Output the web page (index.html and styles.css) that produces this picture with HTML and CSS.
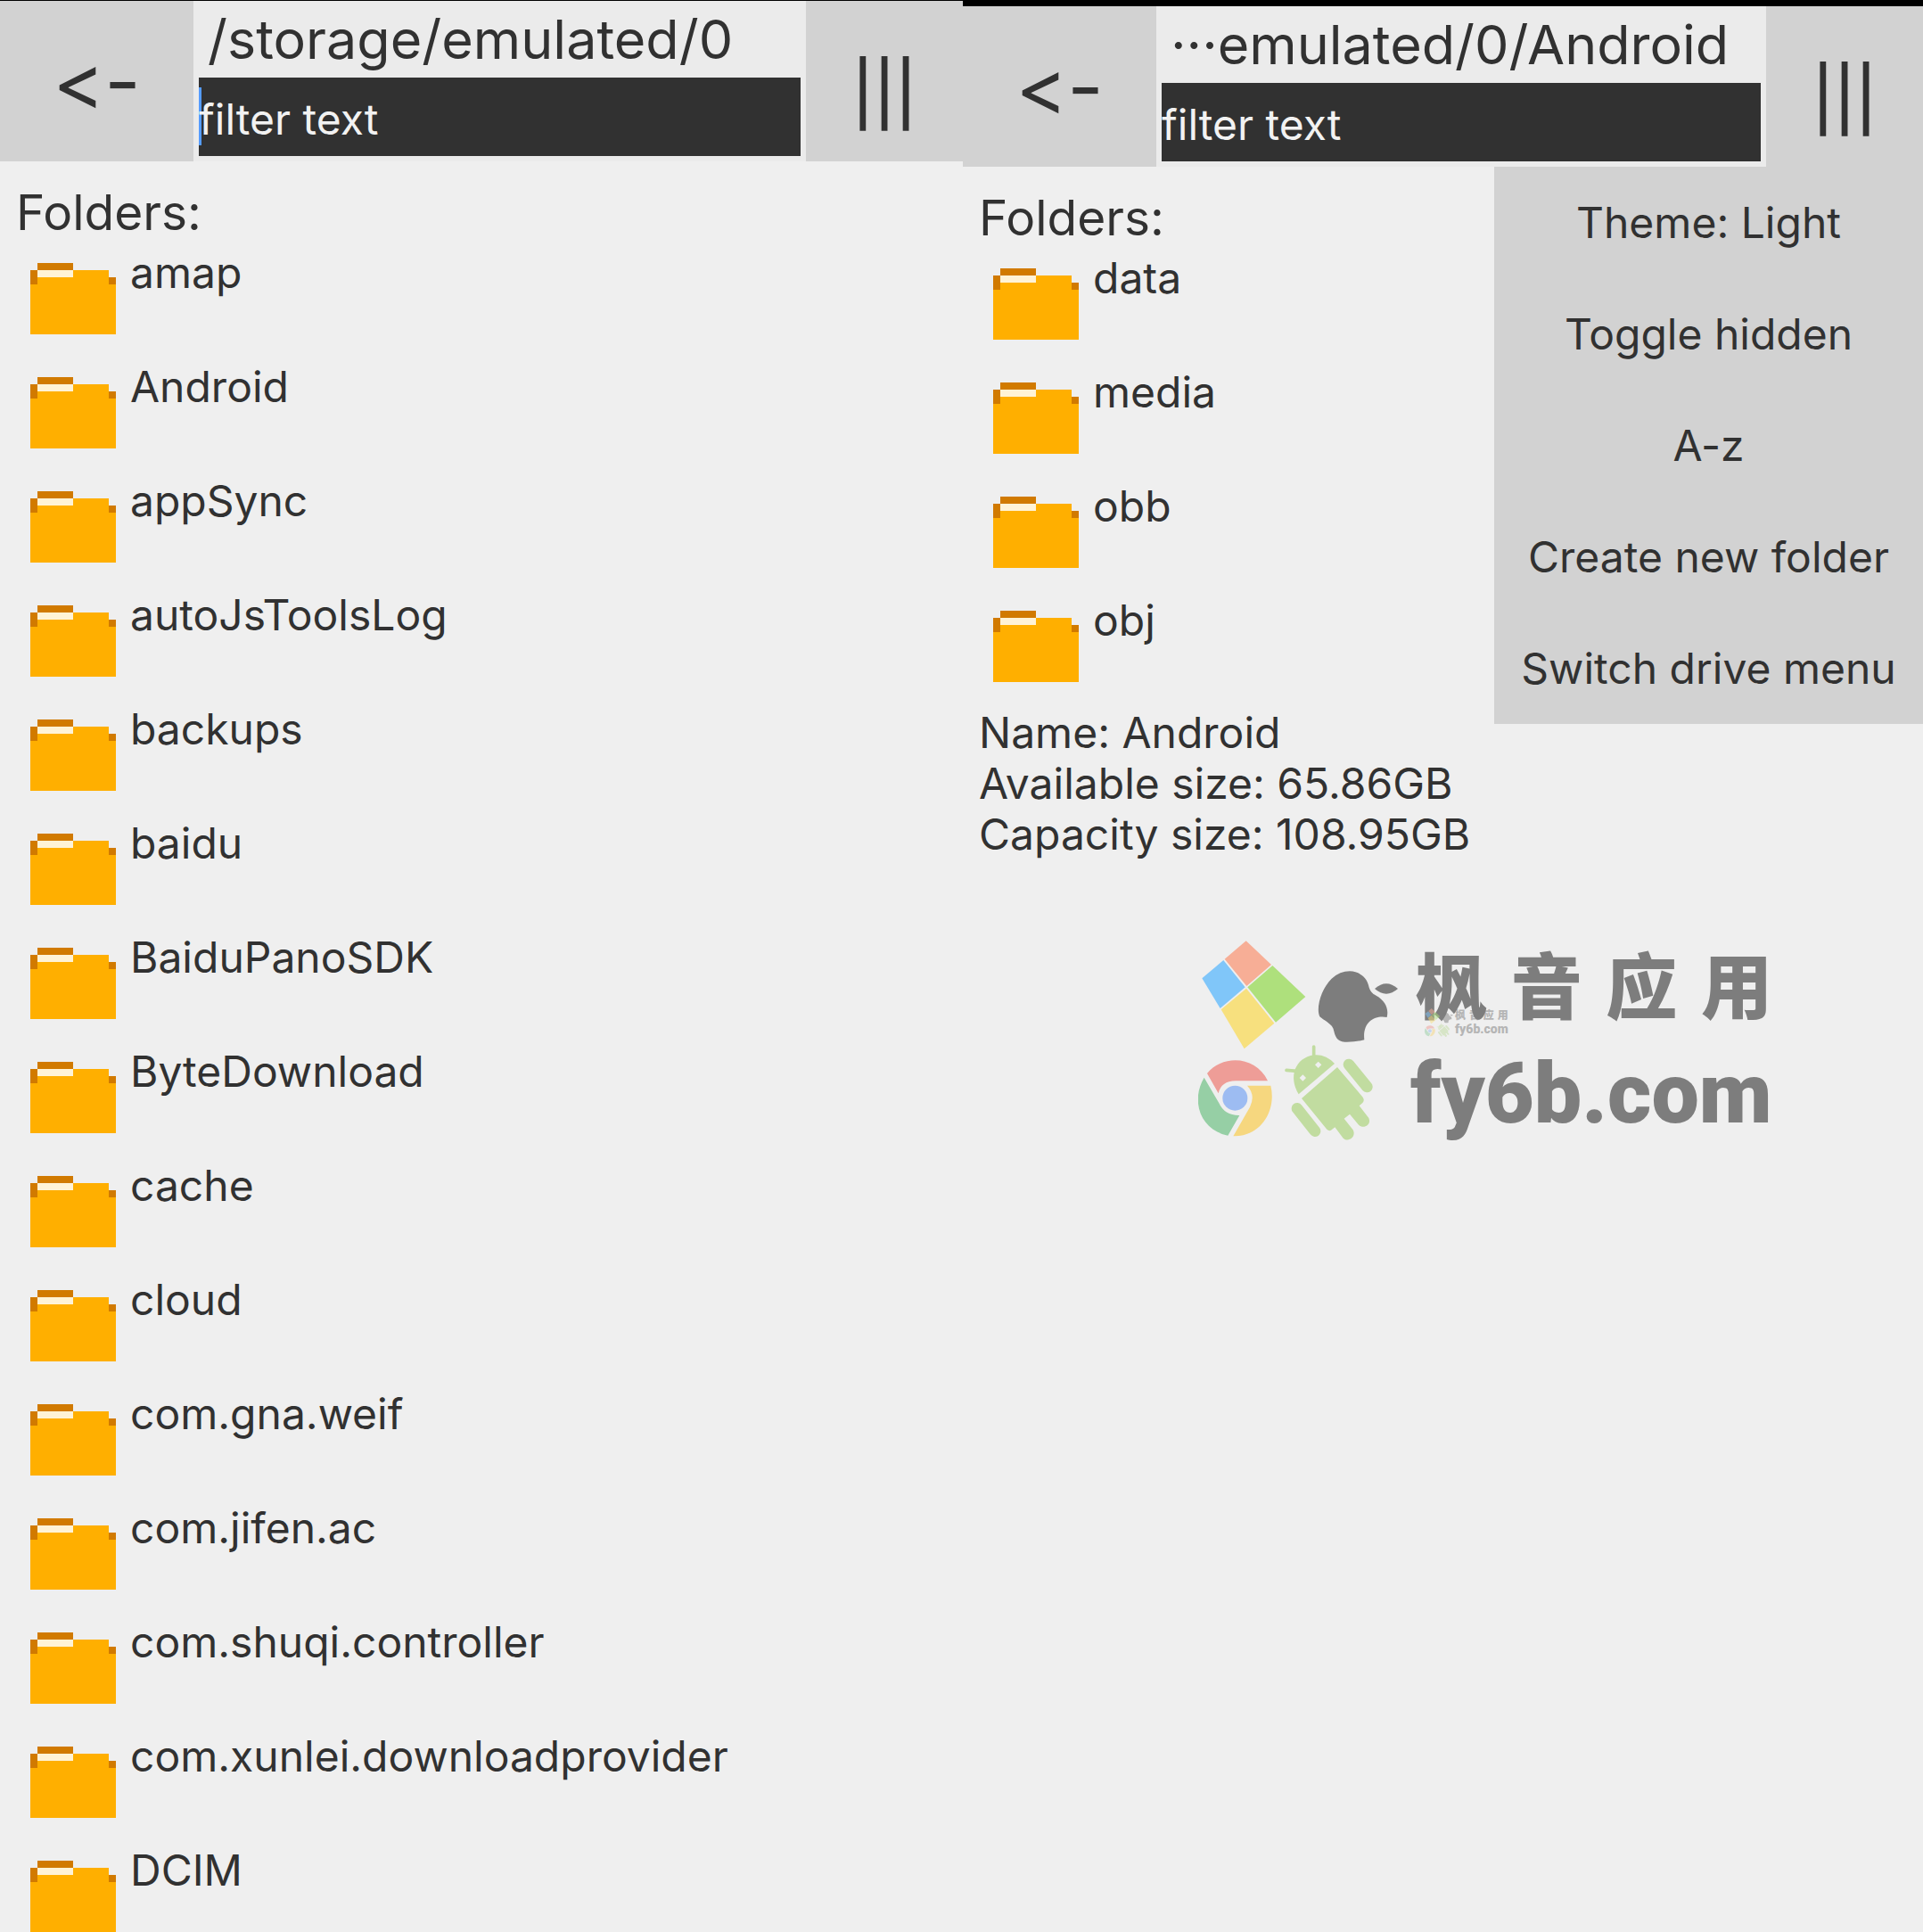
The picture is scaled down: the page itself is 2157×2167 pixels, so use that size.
FILE: index.html
```html
<!DOCTYPE html>
<html lang="en">
<head>
    <meta charset="UTF-8">
    <meta name="viewport" content="width=device-width, initial-scale=1.0">
    <title>File manager</title>
    <link rel="stylesheet" href="styles.css">
</head>
<body>
    <!-- shared drawings -->
    <svg class="defs" aria-hidden="true">
        <symbol id="folder" viewBox="0 0 12 10" shape-rendering="crispEdges">
            <path fill="#ffaf00" d="M0 1h11v1h1v8H0z"/>
            <path fill="#d17a00" d="M1 0h5v1H1zM0 1h1v2H0zM11 2h1v1h-1z"/>
            <path fill="#fff3d6" d="M1 1h5v1H1z"/>
        </symbol>
        <symbol id="brands" viewBox="42 45 672 672">
            <path fill="#f7ae96" d="M203 46L288 126 205 198 131 107z"/>
            <path fill="#80c6f9" d="M127 111L200 202 116 273 55 172z"/>
            <path fill="#aee07c" d="M292 129L403 234 303 320 208 202z"/>
            <path fill="#f7e07e" d="M204 206L298 323 197 409 119 277z"/>
            <path fill="#7d7d7d" d="M552 148C585 148 610 171 615 195C619 215 628 224 641 230C672 247 684 275 677 303C636 295 594 319 601 379Q570 387 535 386C508 384 503 365 499 350C496 325 464 314 451 301C437 272 457 205 491 173Q519 148 552 148z"/>
            <path fill="#7d7d7d" d="M636 207Q675 172 714 207Q675 241 636 207z"/>
            <path fill="#ee9d97" d="M72 492C125 427 237 433 276 517H168Q119 518 110 559z"/>
            <path fill="#96cfa5" d="M62 506L112 592Q131 634 181 633L142 701C48 682 16 583 62 506z"/>
            <path fill="#f6d77f" d="M207 533H286C307 620 249 706 160 703L216 605Q236 565 207 533z"/>
            <circle fill="#9dbcf2" cx="166" cy="575" r="42"/>
            <g fill="#c1dca0">
                <path d="M380 562C345 505 366 440 432 430Q472 427 501 459z"/>
                <path d="M510 471L596 572Q603 583 595 591L584 601 616 642C626 665 598 680 582 665L552 629 533 644 563 682C575 704 548 726 530 710L502 673 489 683Q482 687 475 680L390 576z"/>
            </g>
            <g fill="none" stroke="#c1dca0" stroke-linecap="round">
                <path stroke-width="11" d="M431 402V436M339 481L374 484"/>
                <path stroke-width="38" d="M549 462L610 537M375 610L435 686"/>
            </g>
            <path fill="#efefef" d="M446 452l11 11-11 11-11-11zM394 496l11 11-11 11-11-11z"/>
        </symbol>
    </svg>

    <main class="screens">
        <section class="screen">
            <header class="topbar">
                <button class="bar-button back" type="button" aria-label="Back">&lt;-</button>
                <div class="path-box">
                    <h1 class="path">/storage/emulated/0</h1>
                    <input class="filter focused" type="text" placeholder="filter text" aria-label="filter text">
                </div>
                <button class="bar-button menu-toggle" type="button" aria-label="Menu">|||</button>
            </header>
            <div class="content">
                <h2 class="heading">Folders:</h2>
                <ul class="folders">
                    <li><a class="folder" href="#"><svg class="icon"><use href="#folder"/></svg>amap</a></li>
                    <li><a class="folder" href="#"><svg class="icon"><use href="#folder"/></svg>Android</a></li>
                    <li><a class="folder" href="#"><svg class="icon"><use href="#folder"/></svg>appSync</a></li>
                    <li><a class="folder" href="#"><svg class="icon"><use href="#folder"/></svg>autoJsToolsLog</a></li>
                    <li><a class="folder" href="#"><svg class="icon"><use href="#folder"/></svg>backups</a></li>
                    <li><a class="folder" href="#"><svg class="icon"><use href="#folder"/></svg>baidu</a></li>
                    <li><a class="folder" href="#"><svg class="icon"><use href="#folder"/></svg>BaiduPanoSDK</a></li>
                    <li><a class="folder" href="#"><svg class="icon"><use href="#folder"/></svg>ByteDownload</a></li>
                    <li><a class="folder" href="#"><svg class="icon"><use href="#folder"/></svg>cache</a></li>
                    <li><a class="folder" href="#"><svg class="icon"><use href="#folder"/></svg>cloud</a></li>
                    <li><a class="folder" href="#"><svg class="icon"><use href="#folder"/></svg>com.gna.weif</a></li>
                    <li><a class="folder" href="#"><svg class="icon"><use href="#folder"/></svg>com.jifen.ac</a></li>
                    <li><a class="folder" href="#"><svg class="icon"><use href="#folder"/></svg>com.shuqi.controller</a></li>
                    <li><a class="folder" href="#"><svg class="icon"><use href="#folder"/></svg>com.xunlei.downloadprovider</a></li>
                    <li><a class="folder" href="#"><svg class="icon"><use href="#folder"/></svg>DCIM</a></li>
                </ul>
            </div>
        </section>

        <section class="screen screen-right">
            <header class="topbar">
                <button class="bar-button back" type="button" aria-label="Back">&lt;-</button>
                <div class="path-box">
                    <h1 class="path">···emulated/0/Android</h1>
                    <input class="filter" type="text" placeholder="filter text" aria-label="filter text">
                </div>
                <button class="bar-button menu-toggle" type="button" aria-label="Menu">|||</button>
                <nav class="menu">
                    <button class="menu-item" type="button">Theme: Light</button>
                    <button class="menu-item" type="button">Toggle hidden</button>
                    <button class="menu-item" type="button">A-z</button>
                    <button class="menu-item" type="button">Create new folder</button>
                    <button class="menu-item" type="button">Switch drive menu</button>
                </nav>
            </header>
            <div class="content">
                <h2 class="heading">Folders:</h2>
                <ul class="folders">
                    <li><a class="folder" href="#"><svg class="icon"><use href="#folder"/></svg>data</a></li>
                    <li><a class="folder" href="#"><svg class="icon"><use href="#folder"/></svg>media</a></li>
                    <li><a class="folder" href="#"><svg class="icon"><use href="#folder"/></svg>obb</a></li>
                    <li><a class="folder" href="#"><svg class="icon"><use href="#folder"/></svg>obj</a></li>
                </ul>
                <div class="info">
                    <p>Name: Android</p>
                    <p>Available size: 65.86GB</p>
                    <p>Capacity size: 108.95GB</p>
                </div>
            </div>
            <div class="watermark">
                <svg class="brands"><use href="#brands"/></svg>
                <div class="site">
                    <p class="site-name" lang="zh-CN"><span>枫</span><span>音</span><span>应</span><span>用</span></p>
                    <p class="site-url">fy6b.com</p>
                </div>
                <div class="watermark-small">
                    <svg class="brands"><use href="#brands"/></svg>
                    <div class="site">
                        <p class="site-name" lang="zh-CN"><span>枫</span><span>音</span><span>应</span><span>用</span></p>
                        <p class="site-url">fy6b.com</p>
                    </div>
                </div>
            </div>
        </section>
    </main>
</body>
</html>
```
FILE: styles.css
```css
* {
    box-sizing: border-box;
}

body {
    margin: 0;
    background: #efefef;
    color: #313131;
    font-family: Inter, "Noto Sans CJK SC", sans-serif;
    font-size: 48px;
    font-weight: 400;
    line-height: 58px;
}

h1, h2, p, ul {
    margin: 0;
    padding: 0;
    font-weight: inherit;
}

button, input {
    border: none;
    border-radius: 0;
    padding: 0;
    color: inherit;
    font: inherit;
}

.defs {
    position: absolute;
    width: 0;
    height: 0;
}

.screens {
    display: grid;
    grid-template-columns: 1080fr 1077fr;
    min-height: 100vh;
}

.screen {
    border-top: 1px solid #000;
}

.screen-right {
    border-top-width: 7px;
}

/* top bar */
.topbar {
    position: relative;
    display: flex;
    background: #ebebeb;
}

.bar-button {
    background: #d2d2d2;
}

/* keep "<-" as two characters, Inter would join them into an arrow */
.back {
    width: 217px;
    font-size: 88px;
    font-feature-settings: "calt" 0;
}

.menu-toggle {
    width: 176px;
    padding-top: 28px;
    font-size: 70px;
    font-weight: 500;
}

.path-box {
    flex: 1;
    min-width: 0;
    padding: 0 6px 6px;
}

.path {
    padding-left: 10px;
    font-size: 61px;
    line-height: 86px;
    white-space: nowrap;
}

.filter {
    display: block;
    width: 100%;
    height: 88px;
    padding-top: 4px;
    background: #313131;
    color: #f2f2f2;
}

.filter::placeholder {
    color: #f2f2f2;
    opacity: 1;
}

.focused {
    background: linear-gradient(#559cff, #559cff) 0 11px / 3px 65px no-repeat #313131;
}

/* drop-down menu */
.menu {
    position: absolute;
    top: 100%;
    right: 0;
    display: flex;
    flex-direction: column;
    width: 481px;
    background: #d2d2d2;
}

.menu-item {
    height: 125px;
    background: none;
}

/* folder list */
.content {
    padding: 25px 18px 0;
}

.heading {
    font-size: 55px;
    line-height: 64px;
}

.folders {
    display: flex;
    flex-direction: column;
    gap: 30px;
    margin-top: 7px;
    padding-left: 16px;
    list-style: none;
}

.folder {
    display: flex;
    gap: 16px;
    color: inherit;
    text-decoration: none;
}

.icon {
    width: 96px;
    height: 80px;
    margin-top: 18px;
}

.info {
    margin-top: 28px;
    line-height: 57px;
}

/* watermark */
.watermark {
    position: relative;
    display: flex;
    width: 644px;
    margin: 91px 0 0 264px;
    color: #7d7d7d;
    font-weight: 900;
}

.brands {
    flex: none;
    width: 224px;
    height: 224px;
}

.site {
    flex: 1;
    padding-left: 14px;
}

.site-name {
    display: flex;
    justify-content: space-between;
    padding-left: 6px;
    font-family: "Noto Sans CJK SC", sans-serif;
    font-size: 80px;
    line-height: 92px;
}

.site-url {
    margin-top: 20px;
    font-family: Roboto, sans-serif;
    font-size: 95px;
    line-height: 120px;
}

.watermark-small {
    position: absolute;
    top: 76px;
    left: 254px;
    display: flex;
    width: 92px;
    opacity: 0.5;
}

.watermark-small .brands {
    width: 32px;
    height: 32px;
}

.watermark-small .site {
    padding-left: 2px;
}

.watermark-small .site-name {
    padding-left: 0;
    font-size: 12px;
    line-height: 14px;
}

.watermark-small .site-url {
    margin-top: 0;
    font-size: 14px;
    line-height: 18px;
}
```
